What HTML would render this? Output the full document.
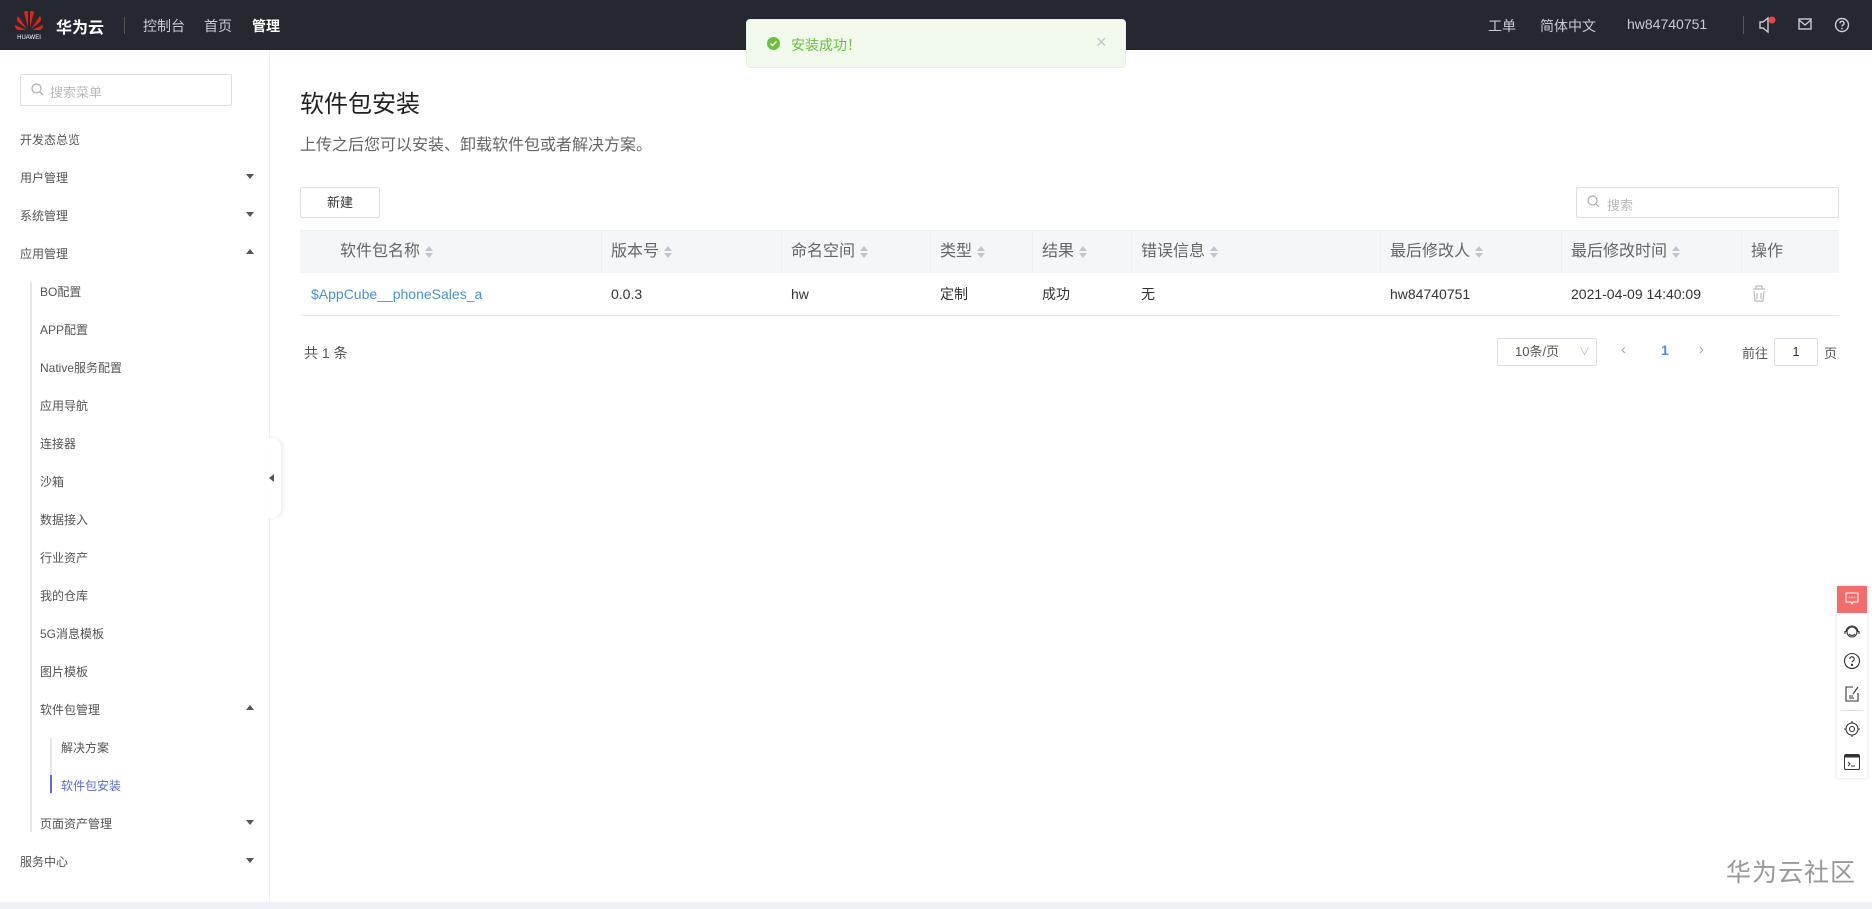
<!DOCTYPE html>
<html><head><meta charset="utf-8"><style>
*{margin:0;padding:0;box-sizing:border-box}
body{width:1872px;height:909px;overflow:hidden;background:#fff;font-family:"Liberation Sans","Noto Sans CJK SC",sans-serif;position:relative;color:#333}
.a{position:absolute;white-space:nowrap}
.hdr{position:absolute;left:0;top:0;width:1872px;height:50px;background:#262831}
.hdr .t{color:#c9cbd2;font-size:14px;top:16px}
.side{position:absolute;left:0;top:50px;width:270px;height:852px;border-right:1px solid #eceef2}
.mi{position:absolute;font-size:12px;color:#555;left:20px}
.mi.s{left:40px}.mi.ss{left:61px}
.arr{position:absolute;left:246px;width:0;height:0;border-left:4px solid transparent;border-right:4px solid transparent}
.dn{border-top:5px solid #555}.up{border-bottom:5px solid #555}
.th{position:absolute;top:230px;height:43px;line-height:43px;font-size:16px;color:#666}
.td{position:absolute;top:273px;height:42px;line-height:42px;font-size:14px;color:#333}
.sort{display:inline-block;vertical-align:middle;margin-left:5px;width:8px;height:12px;position:relative}
.sort:before{content:"";position:absolute;top:0;left:0;border:4px solid transparent;border-bottom:5px solid #c0c4cc;border-top:0}
.sort:after{content:"";position:absolute;bottom:0;left:0;border:4px solid transparent;border-top:5px solid #c0c4cc;border-bottom:0}
.vl{position:absolute;top:230px;width:1px;height:43px;background:#eceef1}
</style></head><body>
<div class="hdr">
  <svg class="a" style="left:14px;top:8px" width="30" height="32" viewBox="0 0 30 32">
    <g fill="#e2231a"><path d="M14 20 L10 4 Q12 2 14 4Z"/><path d="M16 20 L20 4 Q18 2 16 4Z"/><path d="M13 21 L4 8 Q2 11 4 14Z"/><path d="M17 21 L26 8 Q28 11 26 14Z"/><path d="M12 22 L1 17 Q1 21 4 22Z"/><path d="M18 22 L29 17 Q29 21 26 22Z"/></g>
    <text x="15" y="31" font-size="6" fill="#fff" text-anchor="middle" font-family="Liberation Sans">HUAWEI</text>
  </svg>
  <div class="a" style="left:56px;top:14px;color:#fff;font-size:16px;font-weight:bold">华为云</div>
  <div class="a" style="left:124px;top:17px;width:1px;height:17px;background:#555"></div>
  <div class="a t" style="left:143px">控制台</div>
  <div class="a t" style="left:204px">首页</div>
  <div class="a t" style="left:252px;color:#fff;font-weight:bold">管理</div>
  <div class="a t" style="left:1488px">工单</div>
  <div class="a t" style="left:1540px">简体中文</div>
  <div class="a t" style="left:1627px">hw84740751</div>
  <div class="a" style="left:1743px;top:16px;width:1px;height:18px;background:#555"></div>
  <svg class="a" style="left:1758px;top:16px" width="20" height="18" viewBox="0 0 20 18"><path d="M2 6h3l5-4v14l-5-4H2z" fill="none" stroke="#c9cbd2" stroke-width="1.4"/><circle cx="14" cy="4" r="3.5" fill="#e84545"/></svg>
  <svg class="a" style="left:1798px;top:18px" width="14" height="12" viewBox="0 0 14 12"><rect x="1" y="1" width="12" height="10" fill="none" stroke="#c9cbd2" stroke-width="1.4"/><path d="M1 2l6 5 6-5" fill="none" stroke="#c9cbd2" stroke-width="1.4"/></svg>
  <svg class="a" style="left:1834px;top:17px" width="16" height="16" viewBox="0 0 16 16"><circle cx="8" cy="8" r="6.5" fill="none" stroke="#c9cbd2" stroke-width="1.4"/><path d="M6 6.3a2 2 0 1 1 2.6 1.9c-.5.2-.6.6-.6 1.3" fill="none" stroke="#c9cbd2" stroke-width="1.4"/><circle cx="8" cy="11.5" r=".9" fill="#c9cbd2"/></svg>
</div>

<div class="side">
  <div class="a" style="left:20px;top:24px;width:212px;height:32px;border:1px solid #dcdfe6;border-radius:2px"></div>
  <svg class="a" style="left:31px;top:33px" width="13" height="13" viewBox="0 0 13 13"><circle cx="5.5" cy="5.5" r="4.5" fill="none" stroke="#aaa" stroke-width="1.2"/><path d="M9 9l3 3" stroke="#aaa" stroke-width="1.2"/></svg>
  <div class="a" style="left:50px;top:32px;font-size:13px;color:#bbb">搜索菜单</div>
  <div class="a" style="left:30px;top:232px;width:2px;height:550px;background:#e4e6eb"></div>
  <div class="a" style="left:50px;top:688px;width:2px;height:56px;background:#e4e6eb"></div>
  <div class="a" style="left:50px;top:725px;width:2px;height:18px;background:#5b6bcf"></div>
</div>
<div class="mi" style="top:131px">开发态总览</div>
<div class="mi" style="top:169px">用户管理</div><div class="arr dn" style="top:174px"></div>
<div class="mi" style="top:207px">系统管理</div><div class="arr dn" style="top:212px"></div>
<div class="mi" style="top:245px">应用管理</div><div class="arr up" style="top:249px"></div>
<div class="mi s" style="top:283px">BO配置</div>
<div class="mi s" style="top:321px">APP配置</div>
<div class="mi s" style="top:359px">Native服务配置</div>
<div class="mi s" style="top:397px">应用导航</div>
<div class="mi s" style="top:435px">连接器</div>
<div class="mi s" style="top:473px">沙箱</div>
<div class="mi s" style="top:511px">数据接入</div>
<div class="mi s" style="top:549px">行业资产</div>
<div class="mi s" style="top:587px">我的仓库</div>
<div class="mi s" style="top:625px">5G消息模板</div>
<div class="mi s" style="top:663px">图片模板</div>
<div class="mi s" style="top:701px">软件包管理</div><div class="arr up" style="top:705px"></div>
<div class="mi ss" style="top:739px">解决方案</div>
<div class="mi ss" style="top:777px;color:#5b6bcf">软件包安装</div>
<div class="mi s" style="top:815px">页面资产管理</div><div class="arr dn" style="top:820px"></div>
<div class="mi" style="top:853px">服务中心</div><div class="arr dn" style="top:858px"></div>
<div class="a" style="left:265px;top:438px;width:16px;height:80px;background:#fff;border-radius:0 10px 10px 0;box-shadow:2px 0 4px rgba(0,0,0,.08)"></div>
<div class="a" style="left:269px;top:474px;border-top:4px solid transparent;border-bottom:4px solid transparent;border-right:5px solid #555"></div>
<div class="a" style="left:0;top:902px;width:1872px;height:7px;background:#eef0f7"></div>

<div class="a" style="left:300px;top:84px;font-size:24px;color:#222">软件包安装</div>
<div class="a" style="left:300px;top:131px;font-size:16px;color:#666">上传之后您可以安装、卸载软件包或者解决方案。</div>
<div class="a" style="left:300px;top:187px;width:80px;height:31px;border:1px solid #dcdfe6;border-radius:3px;font-size:13px;text-align:center;line-height:29px;color:#333">新建</div>
<div class="a" style="left:1576px;top:187px;width:263px;height:31px;border:1px solid #dcdfe6;border-radius:2px"></div>
<svg class="a" style="left:1587px;top:195px" width="13" height="13" viewBox="0 0 13 13"><circle cx="5.5" cy="5.5" r="4.5" fill="none" stroke="#aaa" stroke-width="1.2"/><path d="M9 9l3 3" stroke="#aaa" stroke-width="1.2"/></svg>
<div class="a" style="left:1607px;top:195px;font-size:13px;color:#bbb">搜索</div>

<div class="a" style="left:300px;top:230px;width:1539px;height:43px;background:#f5f6f8;border-top:1px solid #eceef1"></div>
<div class="a" style="left:300px;top:315px;width:1539px;height:1px;background:#e6e8eb"></div>
<div class="vl" style="left:601px"></div><div class="vl" style="left:781px"></div><div class="vl" style="left:930px"></div><div class="vl" style="left:1032px"></div><div class="vl" style="left:1131px"></div><div class="vl" style="left:1380px"></div><div class="vl" style="left:1561px"></div><div class="vl" style="left:1741px"></div>
<div class="th" style="left:340px">软件包名称<span class="sort"></span></div>
<div class="th" style="left:611px">版本号<span class="sort"></span></div>
<div class="th" style="left:791px">命名空间<span class="sort"></span></div>
<div class="th" style="left:940px">类型<span class="sort"></span></div>
<div class="th" style="left:1042px">结果<span class="sort"></span></div>
<div class="th" style="left:1141px">错误信息<span class="sort"></span></div>
<div class="th" style="left:1390px">最后修改人<span class="sort"></span></div>
<div class="th" style="left:1571px">最后修改时间<span class="sort"></span></div>
<div class="th" style="left:1751px">操作</div>
<div class="td" style="left:311px;color:#4a90d9">$AppCube__phoneSales_a</div>
<div class="td" style="left:611px">0.0.3</div>
<div class="td" style="left:791px">hw</div>
<div class="td" style="left:940px">定制</div>
<div class="td" style="left:1042px">成功</div>
<div class="td" style="left:1141px">无</div>
<div class="td" style="left:1390px">hw84740751</div>
<div class="td" style="left:1571px">2021-04-09 14:40:09</div>
<svg class="a" style="left:1751px;top:284px" width="16" height="18" viewBox="0 0 16 18"><path d="M2 5h12M5 5V2h6v3M3 7l1 10h8l1-10M6 9v6M10 9v6" fill="none" stroke="#bbb" stroke-width="1.2"/></svg>

<div class="a" style="left:304px;top:343px;font-size:14px;color:#555">共 1 条</div>
<div class="a" style="left:1497px;top:338px;width:100px;height:28px;border:1px solid #dcdfe6;border-radius:2px;font-size:13px;color:#555;line-height:26px;padding-left:17px">10条/页</div>
<div class="a" style="left:1579px;top:343px;font-size:11px;color:#bbb">∨</div>
<div class="a" style="left:1621px;top:341px;font-size:15px;color:#aaa">‹</div>
<div class="a" style="left:1661px;top:342px;font-size:14px;color:#4a90d9;font-weight:bold">1</div>
<div class="a" style="left:1699px;top:341px;font-size:15px;color:#aaa">›</div>
<div class="a" style="left:1742px;top:343px;font-size:13px;color:#555">前往</div>
<div class="a" style="left:1774px;top:338px;width:44px;height:28px;border:1px solid #dcdfe6;border-radius:2px;text-align:center;line-height:26px;font-size:13px">1</div>
<div class="a" style="left:1824px;top:343px;font-size:13px;color:#555">页</div>

<div class="a" style="left:746px;top:19px;width:380px;height:49px;background:#f0f9eb;border:1px solid #e1f3d8;border-radius:4px"></div>
<svg class="a" style="left:767px;top:37px" width="13" height="13" viewBox="0 0 13 13"><circle cx="6.5" cy="6.5" r="6.5" fill="#67c23a"/><path d="M3.5 6.5l2 2 4-4" fill="none" stroke="#fff" stroke-width="1.4"/></svg>
<div class="a" style="left:791px;top:35px;font-size:14px;color:#67c23a">安装成功！</div>
<div class="a" style="left:1096px;top:32px;font-size:18px;color:#c0c4cc">×</div>

<div class="a" style="left:1837px;top:586px;width:30px;height:192px;background:#fff;box-shadow:0 0 4px rgba(0,0,0,.12)"></div>
<div class="a" style="left:1837px;top:586px;width:30px;height:27px;background:#f26c6c"></div>
<svg class="a" style="left:1845px;top:592px" width="14" height="14" viewBox="0 0 14 14"><path d="M1 1h12v9H8l-1 2-1-2H1z" fill="none" stroke="#fff" stroke-width="1"/><circle cx="4.5" cy="5.5" r=".7" fill="#fff"/><circle cx="7" cy="5.5" r=".7" fill="#fff"/><circle cx="9.5" cy="5.5" r=".7" fill="#fff"/></svg>
<svg class="a" style="left:1843px;top:623px" width="18" height="18" viewBox="0 0 18 18" fill="none" stroke="#333" stroke-width="1.1"><circle cx="9" cy="9" r="5"/><path d="M3 9a6 6 0 0 1 12 0M6 11q3 3 6 0"/><path d="M2 8v3M16 8v3"/></svg>
<svg class="a" style="left:1843px;top:652px" width="18" height="18" viewBox="0 0 18 18" fill="none" stroke="#333" stroke-width="1.1"><circle cx="9" cy="9" r="7.5"/><path d="M6.8 7a2.2 2.2 0 1 1 2.8 2.1c-.4.2-.6.5-.6 1.2"/><circle cx="9" cy="12.8" r=".6" fill="#333"/></svg>
<svg class="a" style="left:1844px;top:685px" width="16" height="18" viewBox="0 0 16 18" fill="none" stroke="#333" stroke-width="1.1"><path d="M9 2H2v14h12V8"/><path d="M5 11h4M5 13h5M9 9l5-7"/></svg>
<div class="a" style="left:1841px;top:710px;width:22px;height:1px;background:#ddd"></div>
<svg class="a" style="left:1843px;top:720px" width="18" height="18" viewBox="0 0 18 18" fill="none" stroke="#333" stroke-width="1.1"><circle cx="9" cy="9" r="6"/><circle cx="9" cy="9" r="2.5"/><path d="M9 1v2M9 15v2M1 9h2M15 9h2"/></svg>
<svg class="a" style="left:1844px;top:754px" width="16" height="16" viewBox="0 0 16 16"><rect x=".5" y=".5" width="15" height="15" rx="1.5" fill="none" stroke="#333"/><rect x=".5" y=".5" width="15" height="3" fill="#333"/><path d="M4 8l2 2-2 2M7 12h4" fill="none" stroke="#333"/></svg>

<div class="a" style="left:1726px;top:853px;font-size:25px;color:#999;letter-spacing:1px">华为云社区</div>
</body></html>
